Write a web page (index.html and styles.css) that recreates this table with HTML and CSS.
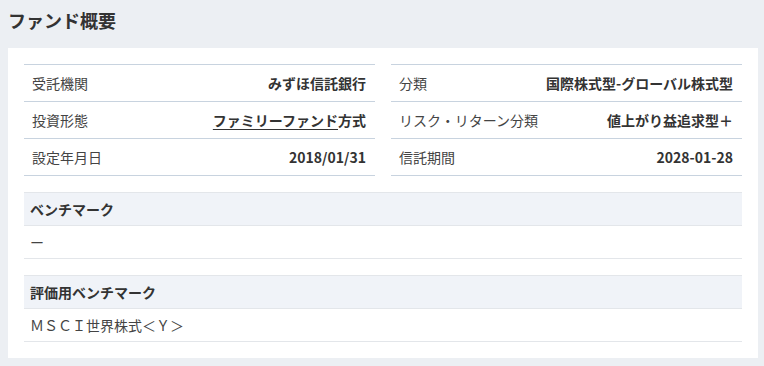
FILE: index.html
```html
<!DOCTYPE html>
<html lang="ja">
<head>
<meta charset="utf-8">
<link rel="stylesheet" href="styles.css">
</head>
<body>
<h1 class="title">ファンド概要</h1>
<div class="card">
  <div class="grid">
    <div class="table">
      <div class="row"><span class="label">受託機関</span><span class="value">みずほ信託銀行</span></div>
      <div class="row"><span class="label">投資形態</span><span class="value"><a class="link" href="#">ファミリーファンド</a>方式</span></div>
      <div class="row"><span class="label">設定年月日</span><span class="value">2018/01/31</span></div>
    </div>
    <div class="table">
      <div class="row"><span class="label">分類</span><span class="value">国際株式型-グローバル株式型</span></div>
      <div class="row"><span class="label">リスク・リターン分類</span><span class="value">値上がり益追求型＋</span></div>
      <div class="row"><span class="label">信託期間</span><span class="value">2028-01-28</span></div>
    </div>
  </div>
  <div class="section">
    <div class="sec-head">ベンチマーク</div>
    <div class="sec-row">ー</div>
  </div>
  <div class="section">
    <div class="sec-head">評価用ベンチマーク</div>
    <div class="sec-row">ＭＳＣＩ世界株式＜Ｙ＞</div>
  </div>
</div>
</body>
</html>
```
FILE: styles.css
```css
html, body {
  margin: 0;
  padding: 0;
}
body {
  background: #eceff3;
  font-family: "Noto Sans CJK JP", "Noto Sans", sans-serif;
  color: #333;
  padding: 0 6px 0 8px;
}
.title {
  margin: 0 0 8px;
  font-size: 18px;
  font-weight: 700;
  line-height: 40px;
  color: #333;
}
.card {
  background: #fff;
  padding: 16px;
}
.grid {
  display: grid;
  grid-template-columns: 1fr 1fr;
  gap: 16px;
}
.table {
  border-top: 1px solid #c8d3df;
}
.row {
  display: flex;
  justify-content: space-between;
  align-items: center;
  height: 36px;
  border-bottom: 1px solid #c8d3df;
  padding: 0 9px 0 8px;
  font-size: 14px;
}
.label {
  color: #444;
}
.value {
  font-weight: 700;
  color: #333;
}
.link {
  color: #333;
  text-decoration: underline;
  text-underline-offset: 3px;
}
.section {
  margin-top: 16px;
}
.sec-head {
  background: #f0f3f8;
  border-top: 1px solid #e3e6ea;
  border-bottom: 1px solid #e3e6ea;
  height: 32px;
  line-height: 32px;
  padding: 0 6px;
  font-size: 14px;
  font-weight: 700;
  color: #333;
}
.sec-row {
  height: 32px;
  line-height: 32px;
  border-bottom: 1px solid #e3e6ea;
  padding: 0 6px;
  font-size: 14px;
  color: #444;
}
```
